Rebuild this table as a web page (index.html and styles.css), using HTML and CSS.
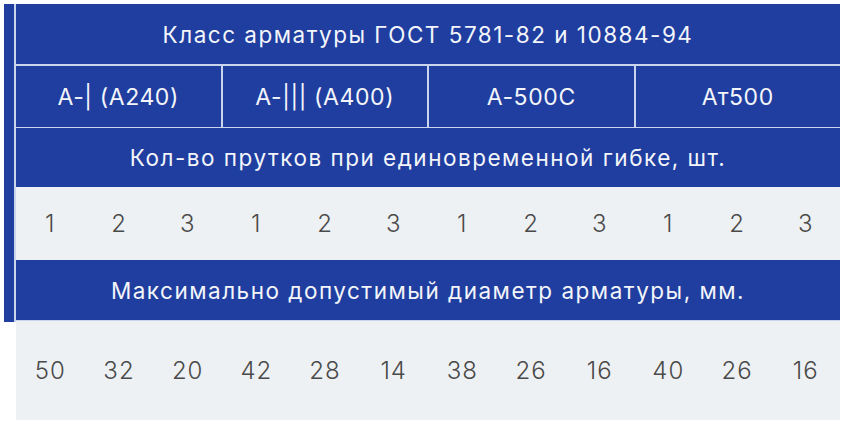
FILE: index.html
```html
<!DOCTYPE html>
<html lang="ru">
<head>
<meta charset="utf-8">
<link rel="stylesheet" href="styles.css">
</head>
<body>
<div class="page">
  <div class="strip"></div>
  <div class="table">
    <div class="row head h1">Класс арматуры ГОСТ 5781-82 и 10884-94</div>
    <div class="row classes">
      <div class="cls">А-| (А240)</div>
      <div class="cls">А-||| (А400)</div>
      <div class="cls">А-500С</div>
      <div class="cls">Ат500</div>
    </div>
    <div class="row head h3">Кол-во прутков при единовременной гибке, шт.</div>
    <div class="row nums n1">
      <span>1</span><span>2</span><span>3</span><span>1</span><span>2</span><span>3</span><span>1</span><span>2</span><span>3</span><span>1</span><span>2</span><span>3</span>
    </div>
    <div class="row head h5">Максимально допустимый диаметр арматуры, мм.</div>
    <div class="row nums n2">
      <span>50</span><span>32</span><span>20</span><span>42</span><span>28</span><span>14</span><span>38</span><span>26</span><span>16</span><span>40</span><span>26</span><span>16</span>
    </div>
  </div>
</div>
</body>
</html>
```
FILE: styles.css
```css
html, body {
  margin: 0;
  padding: 0;
  background: #ffffff;
}
.page {
  display: flex;
  align-items: flex-start;
  padding: 4px 0 0 4px;
  width: 840px;
  box-sizing: border-box;
  font-family: Inter, "Noto Sans", sans-serif;
}
.strip {
  width: 10px;
  height: 318px;
  background: #1f3e9f;
  border-right: 2px solid #c9d5ec;
}
.table {
  flex: 1;
  display: flex;
  flex-direction: column;
}
.row {
  display: flex;
  align-items: center;
  justify-content: center;
}
.head {
  background: #1f3e9f;
  color: #f3f5fa;
  font-size: 22.5px;
  font-weight: 400;
  letter-spacing: 1.5px;
}
.h1 {
  height: 60px;
  border-bottom: 2px solid #c9d5ec;
}
.classes {
  height: 61px;
  background: #1f3e9f;
  border-bottom: 1px solid #c9d5ec;
}
.cls {
  flex: 1;
  height: 100%;
  display: flex;
  align-items: center;
  justify-content: center;
  color: #f3f5fa;
  font-size: 23px;
  letter-spacing: 0.6px;
  border-right: 2px solid #c9d5ec;
}
.cls:last-child {
  border-right: none;
}
.h3 {
  height: 59px;
}
.h5 {
  height: 60px;
  border-bottom: 1px solid #c9d5ec;
}
.nums {
  background: #eef1f3;
  display: grid;
  grid-template-columns: repeat(12, 1fr);
  color: #4a4a4a;
  font-size: 24px;
  font-weight: 300;
  letter-spacing: 1px;
}
.nums span {
  text-align: center;
}
.n1 {
  height: 73px;
}
.n2 {
  height: 99px;
}
```
